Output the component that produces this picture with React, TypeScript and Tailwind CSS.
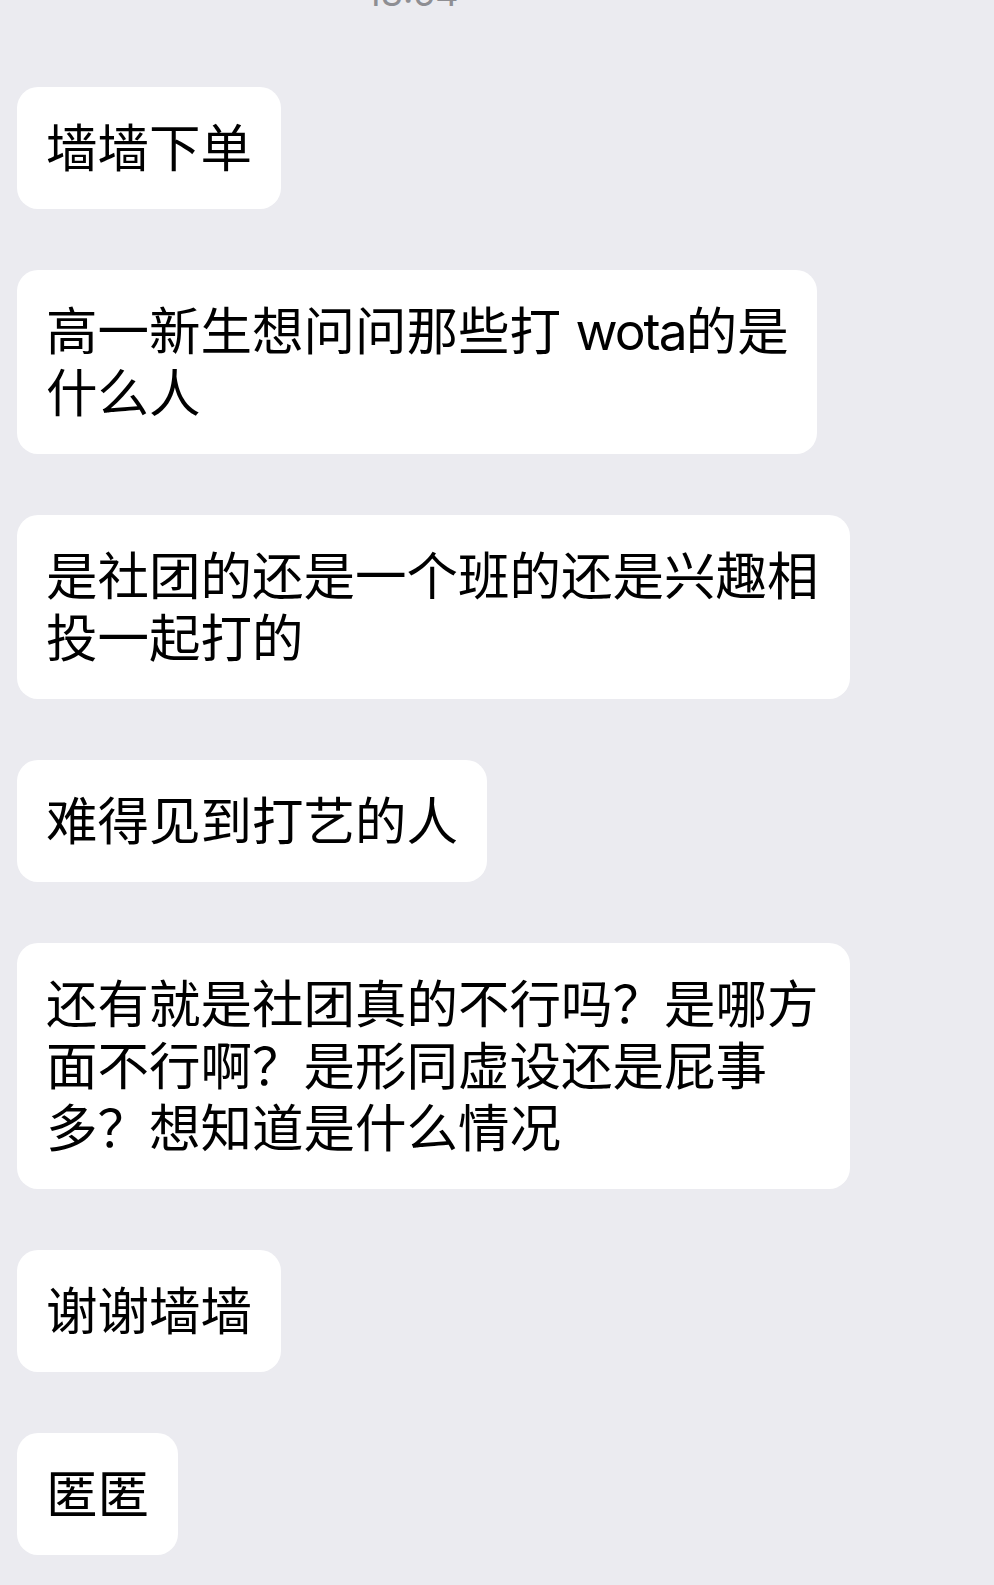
import type { ReactNode } from 'react'

const messages: { lines: ReactNode[]; width?: string }[] = [
  { lines: ['墙墙下单'] },
  {
    lines: [
      <>高一新生想问问那些打 <span className="tracking-[-2px]">wota</span>的是</>,
      '什么人',
    ],
    width: 'w-[800px]',
  },
  { lines: ['是社团的还是一个班的还是兴趣相', '投一起打的'], width: 'w-[833px]' },
  { lines: ['难得见到打艺的人'] },
  { lines: ['还有就是社团真的不行吗？是哪方', '面不行啊？是形同虚设还是屁事', '多？想知道是什么情况'], width: 'w-[833px]' },
  { lines: ['谢谢墙墙'] },
  { lines: ['匿匿'] },
]

function Bubble({ lines, width }: { lines: ReactNode[]; width?: string }) {
  return (
    <div className={`${width ?? 'w-fit'} rounded-[21px] bg-white py-[30px] pl-[29px] pr-[29px] text-[51.5px] leading-[62px] text-black`}>
      {lines.map((l, i) => (
        <div key={i} className="whitespace-nowrap">{l}</div>
      ))}
    </div>
  )
}

export default function App() {
  return (
    <div className="min-h-[1585px] w-[994px] bg-[#ebebf0] font-['Inter','Noto_Sans_CJK_SC',sans-serif]">
      <div className="h-[87px] overflow-hidden">
        <div className="ml-[366px] -mt-[27px] text-[36px] leading-[40px] text-[#8e8e93]">13:54</div>
      </div>
      <div className="flex flex-col gap-[61px] pl-[17px] pb-[29px]">
        {messages.map((m, i) => (
          <Bubble key={i} lines={m.lines} width={m.width} />
        ))}
      </div>
    </div>
  )
}
